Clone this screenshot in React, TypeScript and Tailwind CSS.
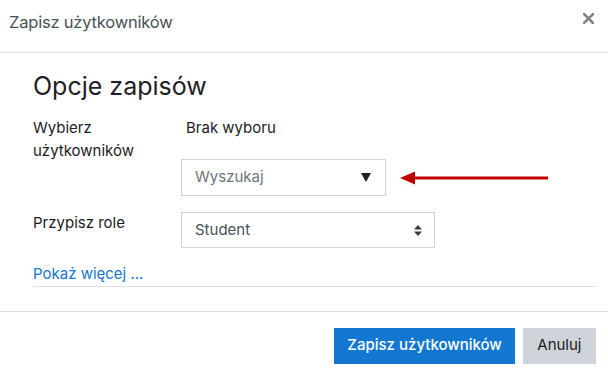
const font = { fontFamily: "Inter, 'Noto Sans', sans-serif" }

function FieldLabel({ children }: { children: React.ReactNode }) {
  return <div className="w-[148px] shrink-0 text-[15px] leading-[22.5px] text-[#1d2125]">{children}</div>
}

export default function App() {
  return (
    <div className="w-[608px] h-[369px] overflow-hidden bg-white" style={font}>
      {/* Header */}
      <div className="flex items-start justify-between h-[53px] border-b border-[#dee2e6] pl-[9px] pr-[14px]">
        <h5 className="mt-[11px] text-[16.5px] leading-[22px] tracking-[-0.2px] text-[#495057]">
          Zapisz użytkowników
        </h5>
        <button type="button" className="mt-[13px]">
          <svg width="11" height="11" viewBox="0 0 11 11">
            <path d="M1 1 L10 10 M10 1 L1 10" stroke="#808080" strokeWidth="2.5" strokeLinecap="square" />
          </svg>
        </button>
      </div>

      {/* Body */}
      <div className="pl-[33px] pr-[12px] pt-[18px]">
        <h3 className="text-[25px] leading-[30px] text-[#1d2125] mb-[16px]">Opcje zapisów</h3>

        <div className="flex">
          <FieldLabel>
            Wybierz
            <br />
            użytkowników
          </FieldLabel>
          <div className="flex flex-col">
            <span className="pl-[5px] text-[15px] leading-[22.5px] text-[#1d2125]">Brak wyboru</span>
            <div className="flex items-center mt-[19.5px]">
              <div className="flex items-center justify-between w-[205px] h-[37px] border border-[#ced4da] pl-[13px] pr-[14px]">
                <span className="text-[15px] text-[#6c757d]">Wyszukaj</span>
                <svg width="10" height="9" viewBox="0 0 10 9">
                  <polygon points="0,0 10,0 5,9" fill="#1d2125" />
                </svg>
              </div>
              {/* red annotation arrow */}
              <svg width="150" height="14" viewBox="0 0 150 14" className="ml-[14px]">
                <polygon points="0,7 15,0.5 15,13.5" fill="#c00000" />
                <rect x="14" y="5.5" width="134" height="3" fill="#c00000" />
              </svg>
            </div>
          </div>
        </div>

        <div className="flex mt-[16px]">
          <FieldLabel>Przypisz role</FieldLabel>
          <div className="flex items-center justify-between w-[254px] h-[36px] border border-[#ced4da] pl-[13px] pr-[12px]">
            <span className="text-[15px] text-[#495057]">Student</span>
            <svg width="8" height="11" viewBox="0 0 8 11">
              <polygon points="4,0 8,4.5 0,4.5" fill="#343a40" />
              <polygon points="0,6.5 8,6.5 4,11" fill="#343a40" />
            </svg>
          </div>
        </div>

        <div className="mt-[13px] border-b border-[#dee2e6]">
          <a href="#" className="text-[15px] leading-[22.5px] text-[#1575d1]">
            Pokaż więcej ...
          </a>
        </div>
      </div>

      {/* Footer */}
      <div className="mt-[24px] border-t border-[#dee2e6] flex justify-end gap-[8px] pt-[16px] pr-[12px]">
        <button type="button" className="h-[36px] px-[13px] bg-[#1177d1] text-white text-[15px] font-medium">
          Zapisz użytkowników
        </button>
        <button type="button" className="h-[36px] px-[14.5px] bg-[#ced4da] text-[#1d2125] text-[15px]">
          Anuluj
        </button>
      </div>
    </div>
  )
}
